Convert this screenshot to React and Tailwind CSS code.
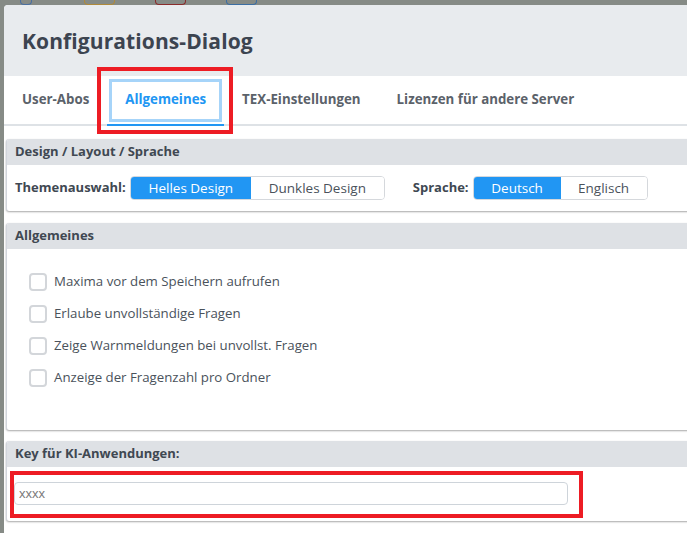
import { useState } from "react";

const font = { fontFamily: '"Open Sans", "Noto Sans", sans-serif' };

function Card({ title, children, bodyClass = "" }) {
  return (
    <div className="rounded-[3px] border-l border-gray-300 shadow-[0_1px_2px_rgba(0,0,0,0.35)] bg-white overflow-hidden">
      <div className="h-[26px] bg-[#dee1e5] flex items-center px-[8px]">
        <span className="text-[13px] font-bold text-[#404852]">{title}</span>
      </div>
      <div className={bodyClass}>{children}</div>
    </div>
  );
}

function Toggle({ options, active }) {
  return (
    <div className="flex h-[24px] rounded-[4px] border border-[#d5d8dc] overflow-hidden">
      {options.map((o) => (
        <button
          key={o.label}
          className={
            "h-full text-[13.5px] flex items-center justify-center " +
            (o.label === active
              ? "bg-[#2196f3] text-white"
              : "bg-white text-[#4a525b]")
          }
          style={{ width: o.w }}
        >
          {o.label}
        </button>
      ))}
    </div>
  );
}

export default function App() {
  const [tab, setTab] = useState("Allgemeines");
  const tabs = ["User-Abos", "Allgemeines", "TEX-Einstellungen", "Lizenzen für andere Server"];
  const checks = [
    "Maxima vor dem Speichern aufrufen",
    "Erlaube unvollständige Fragen",
    "Zeige Warnmeldungen bei unvollst. Fragen",
    "Anzeige der Fragenzahl pro Ordner",
  ];

  return (
    <div className="w-[687px] h-[533px] overflow-hidden bg-[#868b86] relative" style={font}>
      {/* page behind the overlay */}
      <div className="h-[5px] flex gap-[10px] pl-[20px]">
        <div className="w-[12px] h-[5px] border-b border-x border-[#4a6fa0] rounded-b-[4px]" />
        <div className="w-[32px]" />
        <div className="w-[31px] h-[5px] border-b border-x border-[#b08a3a] rounded-b-[4px]" />
        <div className="w-[20px]" />
        <div className="w-[31px] h-[5px] border-b border-x border-[#8a2b2b] rounded-b-[4px]" />
        <div className="w-[20px]" />
        <div className="w-[31px] h-[5px] border-b border-x border-[#3b6ea3] rounded-b-[4px]" />
      </div>

      <div className="ml-[4px] w-[720px] h-[540px] bg-white rounded-tl-[4px] overflow-hidden">
        <div className="h-[71px] bg-[#e8ebee] flex items-center pl-[18px] pt-[3px]">
          <h1 className="text-[21px] font-bold text-[#3c4450] tracking-[0.1px]">Konfigurations-Dialog</h1>
        </div>

        <div className="h-[50px] flex items-stretch border-b-2 border-[#dee2e6]">
          {tabs.map((t) => {
            const on = t === tab;
            return (
              <button
                key={t}
                onClick={() => setTab(t)}
                className={
                  "relative px-[18px] text-[13.3px] font-bold flex items-center " +
                  (on ? "text-[#2196f3]" : "text-[#5b626a]")
                }
              >
                {on && (
                  <span className="absolute left-[2px] right-[2px] top-[3px] bottom-[2px] border-[3px] border-[#a6d4f9]" />
                )}
                {on && <span className="absolute left-0 right-0 -bottom-[2px] h-[2px] bg-[#2196f3]" />}
                {t}
              </button>
            );
          })}
        </div>

        <div className="pl-[2px] pt-[13px] flex flex-col">
          <Card title="Design / Layout / Sprache" bodyClass="h-[46px] flex items-center px-[8px]">
            <span className="text-[13px] font-bold text-[#404852] mr-[4px]">Themenauswahl:</span>
            <Toggle
              active="Helles Design"
              options={[
                { label: "Helles Design", w: 120 },
                { label: "Dunkles Design", w: 133 },
              ]}
            />
            <span className="text-[13px] font-bold text-[#404852] ml-[28px] mr-[4px]">Sprache:</span>
            <Toggle
              active="Deutsch"
              options={[
                { label: "Deutsch", w: 87 },
                { label: "Englisch", w: 86 },
              ]}
            />
          </Card>

          <div className="h-[12px]" />

          <Card title="Allgemeines" bodyClass="h-[181px] pt-[24px] pl-[22px] flex flex-col gap-[14px]">
            {checks.map((c) => (
              <label key={c} className="flex items-center gap-[7px] h-[18px]">
                <span className="w-[18px] h-[18px] rounded-[4px] border-2 border-[#d3d6da] bg-white" />
                <span className="text-[13.25px] text-[#4a525b]">{c}</span>
              </label>
            ))}
          </Card>

          <div className="h-[11px]" />

          <Card title="Key für KI-Anwendungen:" bodyClass="h-[54px] pl-[7px] pt-[15px]">
            <div className="relative w-[554px] h-[23px]">
              <input
                placeholder="xxxx"
                className="block w-[554px] h-[23px] rounded-[4px] border border-[#ced4da] px-[4px] text-[13px] text-[#6b6b6b] placeholder:text-[#7a7a7a] outline-none"
                style={{ fontFamily: '"Liberation Sans", Arial, sans-serif' }}
              />
              <span className="absolute -left-[4px] -top-[11px] w-[573px] h-[47px] border-4 border-[#ed1c24]" />
            </div>
          </Card>
        </div>
      </div>

      {/* annotation around active tab */}
      <span className="absolute left-[97px] top-[67px] w-[136px] h-[67px] border-4 border-[#ed1c24]" />
    </div>
  );
}
